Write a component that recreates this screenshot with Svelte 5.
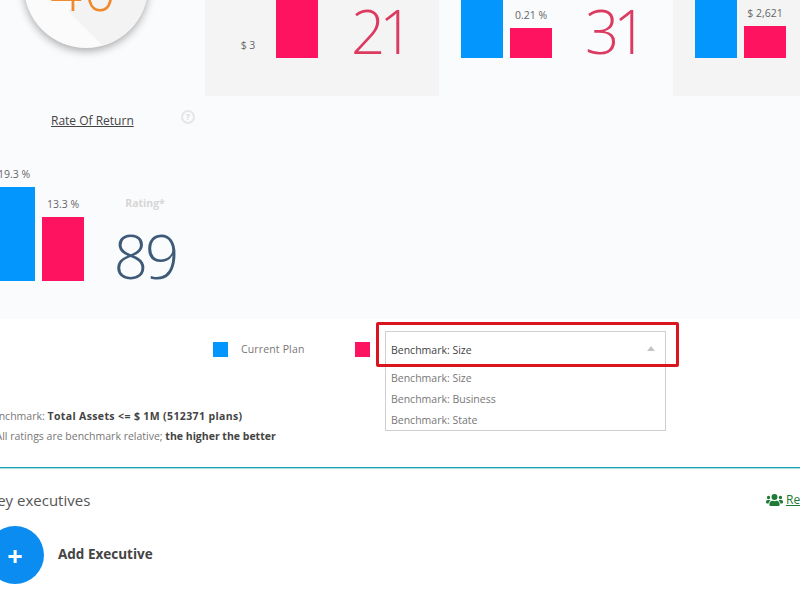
<script lang="ts">
  const cards = [
    { plan: { label: "$ 3", height: 0 }, bench: { label: "", height: 70 }, score: 21, tone: "plain" },
    { plan: { label: "", height: 90 }, bench: { label: "0.21 %", height: 30 }, score: 31, tone: "" },
    { plan: { label: "", height: 90 }, bench: { label: "$ 2,621", height: 32 }, score: "", tone: "plain" },
  ];
  const options = ["Benchmark: Size", "Benchmark: Business", "Benchmark: State"];
</script>

{#snippet bars(plan, bench)}
  <div class="bar-col">
    {#if plan.label}<span class="bar-label">{plan.label}</span>{/if}
    <div class="bar blue" style:height="{plan.height}px"></div>
  </div>
  <div class="bar-col">
    {#if bench.label}<span class="bar-label">{bench.label}</span>{/if}
    <div class="bar pink" style:height="{bench.height}px"></div>
  </div>
{/snippet}

<div class="page">
  <section class="panel">
    <div class="score-col">
      <div class="dial">
        <div class="dial-shade"></div>
        <span class="dial-value">40</span>
      </div>
      <div class="ror-head">
        <span class="ror-title">Rate Of Return</span>
        <span class="help">?</span>
      </div>
      <div class="metric ror-metric">
        {@render bars({ label: "19.3 %", height: 94 }, { label: "13.3 %", height: 64 })}
        <div class="rating">
          <span class="rating-label">Rating*</span>
          <span class="rating-value">89</span>
        </div>
      </div>
    </div>

    <div class="cards">
      {#each cards as card}
        <div class="card" class:plain={card.tone === "plain"}>
          <div class="metric">
            {@render bars(card.plan, card.bench)}
            {#if card.score}<span class="score">{card.score}</span>{/if}
          </div>
        </div>
      {/each}
    </div>
  </section>

  <section class="legend">
    <span class="swatch blue"></span>
    <span class="legend-text">Current Plan</span>
    <span class="swatch pink second"></span>
    <div class="select">
      <div class="select-head">
        <span>Benchmark: Size</span>
        <span class="caret"></span>
      </div>
      <ul class="select-list">
        {#each options as option}
          <li>{option}</li>
        {/each}
      </ul>
    </div>
    <div class="callout"></div>
  </section>

  <section class="notes">
    <p class="note-one">Benchmark: <b>Total Assets &lt;= $ 1M (512371 plans)</b></p>
    <p class="note-two">* All ratings are benchmark relative; <b>the higher the better</b></p>
  </section>

  <section class="execs">
    <div class="execs-head">
      <h2>Key executives</h2>
      <a class="report" href="#report">
        <svg viewBox="0 0 640 512" width="17" height="14" aria-hidden="true">
          <path fill="#1f7a35" d="M96 224a64 64 0 1 0 0-128 64 64 0 0 0 0 128zm448 0a64 64 0 1 0 0-128 64 64 0 0 0 0 128zm32 32h-64c-17.600 0-33.500 7.100-45.100 18.600 40.300 22.100 68.900 62 75.100 109.400h66c17.700 0 32-14.300 32-32v-32c0-35.300-28.700-64-64-64zm-256 0a112 112 0 1 0 0-224 112 112 0 0 0 0 224zm76.800 32h-8.300c-20.800 10-43.900 16-68.500 16s-47.600-6-68.500-16h-8.300C179.600 288 128 339.600 128 403.200V432c0 26.500 21.500 48 48 48h288c26.500 0 48-21.500 48-48v-28.800c0-63.600-51.600-115.200-115.200-115.200zm-223.700-13.400C161.500 263.100 145.600 256 128 256H64c-35.300 0-64 28.700-64 64v32c0 17.700 14.300 32 32 32h65.900c6.300-47.400 34.900-87.300 75.200-109.400z"/>
        </svg>
        <span>Report</span>
      </a>
    </div>
    <div class="add-row">
      <span class="add-btn">+</span>
      <span class="add-label">Add Executive</span>
    </div>
  </section>
</div>

<style>
  :global(body) {
    margin: 0;
    background: #fff;
  }

  .page {
    position: relative;
    width: 800px;
    height: 600px;
    overflow: hidden;
    font-family: "Open Sans", "Noto Sans", sans-serif;
    color: #555;
  }

  .panel {
    display: flex;
    height: 319px;
    background: #fafbfd;
  }

  .score-col {
    display: flex;
    flex-direction: column;
    flex: 0 0 205px;
  }

  .dial {
    position: relative;
    flex-shrink: 0;
    width: 124px;
    height: 124px;
    margin: -76px 0 0 24px;
    border-radius: 50%;
    overflow: hidden;
    background: #fbfbfc;
    box-shadow: 0 3px 8px rgba(0, 0, 0, 0.32);
  }

  .dial-shade {
    position: absolute;
    left: 44px;
    top: -13px;
    width: 140px;
    height: 100px;
    background: #f3f3f3;
    transform-origin: 0 100%;
    transform: rotate(45deg);
  }

  .dial-value {
    position: absolute;
    left: -2px;
    right: 2px;
    top: 37px;
    text-align: center;
    font-size: 56px;
    line-height: 56px;
    letter-spacing: 2px;
    font-weight: 300;
    color: #ef8a2c;
  }

  .ror-head {
    position: relative;
    margin-top: 60px;
    padding-left: 51px;
    height: 18px;
  }

  .ror-title {
    font-size: 12px;
    line-height: 18px;
    color: #444;
    text-decoration: underline;
  }

  .help {
    position: absolute;
    left: 181px;
    top: 2px;
    box-sizing: border-box;
    width: 14px;
    height: 14px;
    border: 2px solid #e6e6e6;
    border-radius: 50%;
    font-size: 9px;
    line-height: 10px;
    font-weight: 700;
    text-align: center;
    color: #ddd;
  }

  .metric {
    display: flex;
    align-items: flex-end;
    gap: 7px;
  }

  .ror-metric {
    margin: auto 0 38px -7px;
  }

  .bar-col {
    display: flex;
    flex-direction: column;
    align-items: center;
    flex: 0 0 42px;
  }

  .bar-label {
    font-size: 10.5px;
    line-height: 14px;
    margin-bottom: 6px;
    color: #666;
    white-space: nowrap;
  }

  .bar {
    width: 42px;
  }

  .blue {
    background: #0396fd;
  }

  .pink {
    background: #fe1361;
  }

  .rating {
    display: flex;
    flex-direction: column;
    align-items: center;
    width: 70px;
    margin-left: 19px;
  }

  .rating-label {
    font-size: 10.5px;
    font-weight: 700;
    color: #d6d6d6;
  }

  .rating-value {
    font-size: 60px;
    line-height: 60px;
    letter-spacing: -3px;
    margin-top: 16px;
    margin-bottom: -5px;
    font-weight: 300;
    color: #3d5a78;
  }

  .cards {
    display: flex;
    align-self: flex-start;
    height: 96px;
  }

  .card {
    display: flex;
    align-items: flex-end;
    box-sizing: border-box;
    flex: 0 0 234px;
    height: 96px;
    padding: 0 0 38px 22px;
    overflow: hidden;
  }

  .card.plain {
    background: #f4f4f4;
  }

  .score {
    font-size: 60px;
    line-height: 60px;
    letter-spacing: -6px;
    margin: 0 0 -3px 26px;
    font-weight: 300;
    color: #dc3a60;
  }

  .legend {
    position: relative;
    display: flex;
    align-items: flex-start;
    height: 87px;
    padding-left: 213px;
  }

  .swatch {
    flex-shrink: 0;
    width: 15px;
    height: 15px;
    margin-top: 23px;
  }

  .swatch.second {
    margin-left: 51px;
  }

  .legend-text {
    margin: 23px 0 0 13px;
    font-size: 10.5px;
    line-height: 15px;
    letter-spacing: 0.15px;
    color: #777;
  }

  .select {
    position: absolute;
    left: 385px;
    top: 12px;
    z-index: 1;
    box-sizing: border-box;
    width: 281px;
    background: #fff;
    border: 1px solid #cfcfcf;
    font-size: 10.5px;
    color: #444;
  }

  .select-head {
    display: flex;
    align-items: center;
    justify-content: space-between;
    height: 36px;
    padding: 0 10px 0 5px;
  }

  .caret {
    width: 0;
    height: 0;
    border: 4px solid transparent;
    border-top: 0;
    border-bottom: 5px solid #c4c4c4;
    margin: 0 0 3px;
  }

  .select-list {
    list-style: none;
    margin: 0;
    padding: 0;
    color: #777;
  }

  .select-list li {
    height: 21px;
    line-height: 20px;
    padding-left: 5px;
  }

  .select-list li:last-child {
    height: 20px;
  }

  .callout {
    position: absolute;
    left: 376px;
    top: 3px;
    z-index: 2;
    box-sizing: border-box;
    width: 303px;
    height: 45px;
    border: 3px solid #d9161f;
    border-radius: 2px;
  }

  .notes {
    height: 61px;
    border-bottom: 1px solid #12a3ad;
    box-shadow: 0 1px 0 rgba(18, 163, 173, 0.35);
    font-size: 10.5px;
    line-height: 20px;
    color: #777;
  }

  .notes p {
    margin: 0;
    white-space: nowrap;
  }

  .notes b {
    color: #444;
  }

  .note-one {
    margin-left: -14px !important;
  }

  .note-one b {
    letter-spacing: 0.37px;
  }

  .note-two {
    margin-left: -13px !important;
  }

  .execs-head {
    display: flex;
    align-items: center;
    justify-content: space-between;
    height: 33px;
    margin-top: 15px;
  }

  .execs-head h2 {
    margin: 0 0 0 -12px;
    font-size: 15px;
    font-weight: 500;
    color: #555;
  }

  .report {
    display: flex;
    align-items: center;
    gap: 3px;
    margin-right: -40px;
    font-size: 12px;
    color: #1f7a35;
    text-decoration: underline;
    width: 74px;
  }

  .add-row {
    display: flex;
    align-items: center;
    gap: 14px;
    margin: 10px 0 0 -14px;
  }

  .add-btn {
    display: flex;
    align-items: center;
    justify-content: center;
    width: 58px;
    height: 58px;
    border-radius: 50%;
    background: #0a8cf0;
    color: #fff;
    font-size: 27px;
    font-weight: 700;
  }

  .add-label {
    margin-bottom: 2px;
    font-size: 13.5px;
    font-weight: 700;
    color: #444;
  }
</style>
